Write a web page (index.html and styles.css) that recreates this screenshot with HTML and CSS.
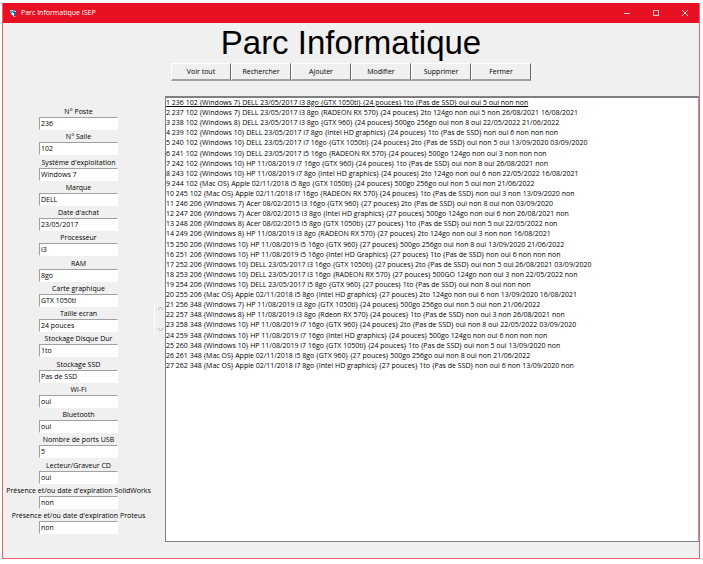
FILE: index.html
```html
<!DOCTYPE html>
<html lang="fr">
<head>
<meta charset="utf-8">
<title>Parc Informatique ISEP</title>
<link rel="stylesheet" href="styles.css">
</head>
<body>
<div class="window">
  <header class="titlebar">
    <svg class="app-icon" viewBox="0 0 8 8" aria-hidden="true"><path d="M2 2h5v5l-2 1-2-3-1-1z" fill="#e8f2f8"/><path d="M1 1h5v3H1z" fill="#38a0d8"/><path d="M4 3h3v4H5V5H4z" fill="#2d5f94"/><path d="M1 1h3v1H1z" fill="#f2d28c"/><path d="M2 4h3v2H3z" fill="#fff"/></svg>
    <span class="window-name">Parc Informatique ISEP</span>
    <button class="control" type="button" aria-label="Réduire"><svg viewBox="0 0 8 8"><path d="M1 4.500h6"/></svg></button>
    <button class="control" type="button" aria-label="Agrandir"><svg viewBox="0 0 8 8"><path d="M1.500 1.500h5v5h-5z"/></svg></button>
    <button class="control" type="button" aria-label="Fermer la fenêtre"><svg viewBox="0 0 8 8"><path d="M1 1l6 6M7 1L1 7"/></svg></button>
  </header>
  <h1>Parc Informatique</h1>
  <nav class="toolbar">
    <button type="button">Voir tout</button>
    <button type="button">Rechercher</button>
    <button type="button">Ajouter</button>
    <button type="button">Modifier</button>
    <button type="button">Supprimer</button>
    <button type="button">Fermer</button>
  </nav>
  <main class="content">
    <form class="fields">
      <div class="field"><label for="poste">N° Poste</label><input id="poste" value="236"></div>
      <div class="field"><label for="salle">N° Salle</label><input id="salle" value="102"></div>
      <div class="field"><label for="systeme">Système d'exploitation</label><input id="systeme" value="Windows 7"></div>
      <div class="field"><label for="marque">Marque</label><input id="marque" value="DELL"></div>
      <div class="field"><label for="achat">Date d'achat</label><input id="achat" value="23/05/2017"></div>
      <div class="field"><label for="processeur">Processeur</label><input id="processeur" value="i3"></div>
      <div class="field"><label for="ram">RAM</label><input id="ram" value="8go"></div>
      <div class="field"><label for="carte">Carte graphique</label><input id="carte" value="GTX 1050ti"></div>
      <div class="field"><label for="ecran">Taille ecran</label><input id="ecran" value="24 pouces"></div>
      <div class="field"><label for="disque">Stockage Disque Dur</label><input id="disque" value="1to"></div>
      <div class="field"><label for="ssd">Stockage SSD</label><input id="ssd" value="Pas de SSD"></div>
      <div class="field"><label for="wifi">Wi-Fi</label><input id="wifi" value="oui"></div>
      <div class="field"><label for="bluetooth">Bluetooth</label><input id="bluetooth" value="oui"></div>
      <div class="field"><label for="usb">Nombre de ports USB</label><input id="usb" value="5"></div>
      <div class="field"><label for="cd">Lecteur/Graveur CD</label><input id="cd" value="oui"></div>
      <div class="field"><label for="solidworks">Présence et/ou date d'expiration SolidWorks</label><input id="solidworks" value="non"></div>
      <div class="field"><label for="proteus">Présence et/ou date d'expiration Proteus</label><input id="proteus" value="non"></div>
    </form>
    <div class="scroller">
      <button type="button" aria-label="Monter"><svg viewBox="0 0 7 5"><path d="M1 4l2.500-3L6 4"/></svg></button>
      <button type="button" aria-label="Descendre"><svg viewBox="0 0 7 5"><path d="M1 1l2.500 3L6 1"/></svg></button>
    </div>
    <div class="listbox">
      <ul class="rows">
        <li class="active">1 236 102 {Windows 7} DELL 23/05/2017 i3 8go {GTX 1050ti} {24 pouces} 1to {Pas de SSD} oui oui 5 oui non non</li>
        <li>2 237 102 {Windows 7} DELL 23/05/2017 i3 8go {RADEON RX 570} {24 pouces} 2to 124go non oui 5 non 26/08/2021 16/08/2021</li>
        <li>3 238 102 {Windows 8} DELL 23/05/2017 i3 8go {GTX 960} {24 pouces} 500go 256go oui non 8 oui 22/05/2022 21/06/2022</li>
        <li>4 239 102 {Windows 10} DELL 23/05/2017 i7 8go {Intel HD graphics} {24 pouces} 1to {Pas de SSD} non oui 6 non non non</li>
        <li>5 240 102 {Windows 10} DELL 23/05/2017 i7 16go {GTX 1050ti} {24 pouces} 2to {Pas de SSD} oui non 5 oui 13/09/2020 03/09/2020</li>
        <li>6 241 102 {Windows 10} DELL 23/05/2017 i5 16go {RADEON RX 570} {24 pouces} 500go 124go non oui 3 non non non</li>
        <li>7 242 102 {Windows 10} HP 11/08/2019 i7 16go {GTX 960} {24 pouces} 1to {Pas de SSD} oui non 8 oui 26/08/2021 non</li>
        <li>8 243 102 {Windows 10} HP 11/08/2019 i7 8go {Intel HD graphics} {24 pouces} 2to 124go non oui 6 non 22/05/2022 16/08/2021</li>
        <li>9 244 102 {Mac OS} Apple 02/11/2018 i5 8go {GTX 1050ti} {24 pouces} 500go 256go oui non 5 oui non 21/06/2022</li>
        <li>10 245 102 {Mac OS} Apple 02/11/2018 i7 16go {RADEON RX 570} {24 pouces} 1to {Pas de SSD} non oui 3 non 13/09/2020 non</li>
        <li>11 246 206 {Windows 7} Acer 08/02/2015 i3 16go {GTX 960} {27 pouces} 2to {Pas de SSD} oui non 8 oui non 03/09/2020</li>
        <li>12 247 206 {Windows 7} Acer 08/02/2015 i3 8go {Intel HD graphics} {27 pouces} 500go 124go non oui 6 non 26/08/2021 non</li>
        <li>13 248 206 {Windows 8} Acer 08/02/2015 i5 8go {GTX 1050ti} {27 pouces} 1to {Pas de SSD} oui non 5 oui 22/05/2022 non</li>
        <li>14 249 206 {Windows 8} HP 11/08/2019 i3 8go {RADEON RX 570} {27 pouces} 2to 124go non oui 3 non non 16/08/2021</li>
        <li>15 250 206 {Windows 10} HP 11/08/2019 i5 16go {GTX 960} {27 pouces} 500go 256go oui non 8 oui 13/09/2020 21/06/2022</li>
        <li>16 251 206 {Windows 10} HP 11/08/2019 i5 16go {Intel HD Graphics} {27 pouces} 1to {Pas de SSD} non oui 6 non non non</li>
        <li>17 252 206 {Windows 10} DELL 23/05/2017 i3 16go {GTX 1050ti} {27 pouces} 2to {Pas de SSD} oui non 5 oui 26/08/2021 03/09/2020</li>
        <li>18 253 206 {Windows 10} DELL 23/05/2017 i3 16go {RADEON RX 570} {27 pouces} 500GO 124go non oui 3 non 22/05/2022 non</li>
        <li>19 254 206 {Windows 10} DELL 23/05/2017 i5 8go {GTX 960} {27 pouces} 1to {Pas de SSD} oui non 8 oui non non</li>
        <li>20 255 206 {Mac OS} Apple 02/11/2018 i5 8go {Intel HD graphics} {27 pouces} 2to 124go non oui 6 non 13/09/2020 16/08/2021</li>
        <li>21 256 348 {Windows 7} HP 11/08/2019 i3 8go {GTX 1050ti} {24 pouces} 500go 256go oui non 5 oui non 21/06/2022</li>
        <li>22 257 348 {Windows 8} HP 11/08/2019 i3 8go {Rdeon RX 570} {24 pouces} 1to {Pas de SSD} non oui 3 non 26/08/2021 non</li>
        <li>23 258 348 {Windows 10} HP 11/08/2019 i7 16go {GTX 960} {24 pouces} 2to {Pas de SSD} oui non 8 oui 22/05/2022 03/09/2020</li>
        <li>24 259 348 {Windows 10} HP 11/08/2019 i7 16go {Intel HD graphics} {24 pouces} 500go 124go non oui 6 non non non</li>
        <li>25 260 348 {Windows 10} HP 11/08/2019 i7 16go {GTX 1050ti} {24 pouces} 1to {Pas de SSD} oui non 5 oui 13/09/2020 non</li>
        <li>26 261 348 {Mac OS} Apple 02/11/2018 i5 8go {GTX 960} {27 pouces} 500go 256go oui non 8 oui non 21/06/2022</li>
        <li>27 262 348 {Mac OS} Apple 02/11/2018 i7 8go {Intel HD graphics} {27 pouces} 1to {Pas de SSD} non oui 6 non 13/09/2020 non</li>
      </ul>
    </div>
  </main>
</div>
</body>
</html>
```
FILE: styles.css
```css
* {
  box-sizing: border-box;
}

body {
  margin: 0;
  min-height: 100vh;
  display: flex;
  padding: 3px 3px 5px 2px;
  background: #fff;
  color: #000;
  font: 7px/10px "Open Sans", "Noto Sans", sans-serif;
}

button,
input {
  font: inherit;
  color: inherit;
  margin: 0;
}

.window {
  flex: 1;
  display: flex;
  flex-direction: column;
  border: 1px solid #ee5f6b;
  border-top-width: 0;
  background: #f0f0f0;
}

.titlebar {
  display: flex;
  align-items: center;
  height: 20px;
  padding-left: 6px;
  background: #e81123;
  color: #fff;
}

.app-icon {
  width: 8px;
  height: 8px;
  margin-right: 4px;
}

.window-name {
  flex: 1;
}

.control {
  display: grid;
  place-items: center;
  width: 29px;
  height: 20px;
  padding: 0;
  border: 0;
  background: none;
}

.control svg {
  width: 8px;
  height: 8px;
  fill: none;
  stroke: #fbd0d4;
}

h1 {
  margin: 0;
  color: #000;
  font: 33px/40px "Liberation Sans", Arial, sans-serif;
  text-align: center;
}

.toolbar {
  display: flex;
  justify-content: center;
}

.toolbar button {
  width: 60px;
  height: 18px;
  padding: 0;
  border: 1px solid #fff;
  border-right: 1px solid #696969;
  border-bottom: 2px solid #a0a0a0;
  background: #f0f0f0;
}

.content {
  flex: 1;
  display: flex;
  padding: 15px 0 16px;
}

.fields {
  display: flex;
  flex-direction: column;
  justify-content: space-between;
  width: 151px;
  padding: 10px 0 8px;
}

.field {
  display: flex;
  flex-direction: column;
  align-items: center;
  white-space: nowrap;
}

.field label {
  line-height: 11px;
}

.field input {
  width: 79px;
  height: 13px;
  padding: 0 1px;
  border: 1px solid #fff;
  border-top-color: #a0a0a0;
  border-left-color: #a0a0a0;
  border-radius: 0;
  background: #fff;
}

.scroller {
  align-self: center;
  display: flex;
  flex-direction: column;
  justify-content: space-between;
  width: 11px;
  height: 32px;
  padding: 3px 1px;
  border-left: 1px solid #fff;
}

.scroller button {
  display: grid;
  place-items: center;
  padding: 0;
  border: 0;
  background: none;
}

.scroller svg {
  width: 7px;
  height: 5px;
  fill: none;
  stroke: #b4b4b4;
}

.listbox {
  flex: 1;
  min-width: 0;
  border: 1px solid #808080;
  border-right-color: #a0a0a0;
  border-top-width: 2px;
  background: #fff;
}

.rows {
  display: grid;
  grid-auto-rows: 1fr;
  height: 273px;
  margin: 0;
  padding: 0;
  list-style: none;
  white-space: nowrap;
}

.rows .active {
  text-decoration: underline;
}
```
